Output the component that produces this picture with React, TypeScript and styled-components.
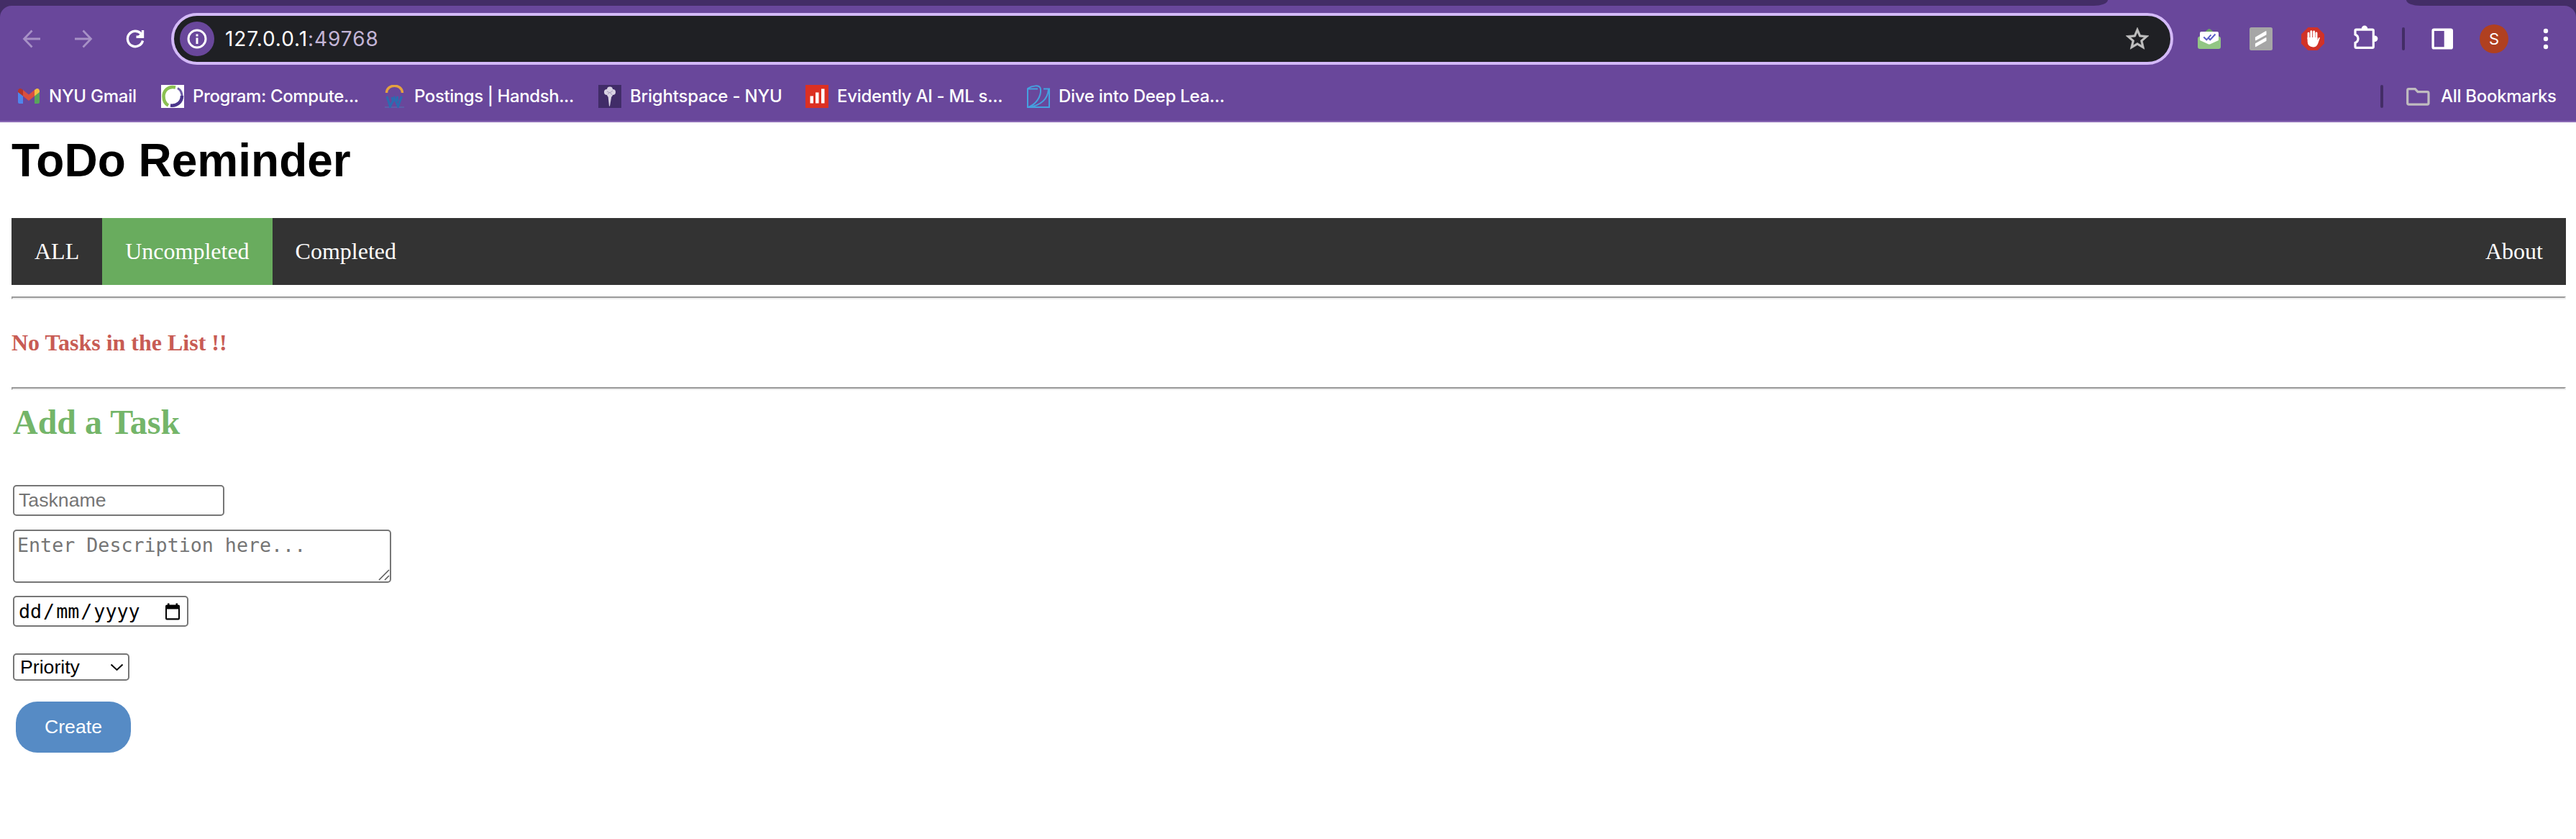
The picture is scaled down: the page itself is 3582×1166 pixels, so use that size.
import React from "react";
import styled, { createGlobalStyle } from "styled-components";

const GlobalStyle = createGlobalStyle`
  body { margin: 0; background: #fff; }
  * { box-sizing: border-box; }
`;

const sans = `"Liberation Sans", Arial, sans-serif`;
const serif = `"Liberation Serif", "Times New Roman", serif`;
const ui = `Inter, Roboto, sans-serif`;
const mono = `"DejaVu Sans Mono", monospace`;

const Screen = styled.div`
  width: 3582px;
  height: 1166px;
  overflow: hidden;
  background: #fff;
`;

const Chrome = styled.header`
  height: 170px;
  background: #432d66;
  border-bottom: 2px solid #8b6bb5;
  display: flex;
  flex-direction: column;
`;
const TabStrip = styled.div`
  height: 8px;
  flex: none;
  background: #69479b;
  display: flex;
  justify-content: space-between;
`;
const InactiveTabs = styled.div<{ $side: "left" | "right" }>`
  width: ${(p) => (p.$side === "left" ? 2931 : 236)}px;
  background: #432d66;
  border-radius: ${(p) => (p.$side === "left" ? "0 0 20px 0 / 0 0 8px 0" : "0 0 0 20px / 0 0 0 8px")};
`;
const ChromeBody = styled.div`
  flex: 1;
  background: #69479b;
  border-radius: 16px 16px 0 0;
  display: flex;
  flex-direction: column;
`;
const Toolbar = styled.div`
  height: 92px;
  flex: none;
  display: flex;
  align-items: center;
`;
const NavButtons = styled.div`
  width: 238px;
  flex: none;
  padding-left: 24px;
  display: flex;
  gap: 32px;
`;
const Glyph = styled.svg<{ $s?: number }>`
  display: block;
  flex: none;
  width: ${(p) => p.$s ?? 40}px;
  height: ${(p) => p.$s ?? 40}px;
`;
const AddressBar = styled.div`
  width: 2784px;
  flex: none;
  height: 72px;
  border: 4px solid #d3b9f8;
  border-radius: 36px;
  background: #1f2024;
  display: flex;
  align-items: center;
  padding: 0 29px 0 8px;
`;
const InfoBadge = styled.div`
  width: 48px;
  height: 48px;
  border-radius: 50%;
  background: #69479b;
  display: grid;
  place-items: center;
`;
const Url = styled.div`
  flex: 1;
  margin-left: 15px;
  font: 400 28px/36px ${ui};
  letter-spacing: 0.95px;
  color: #fff;
  span { color: #c3b5d6; }
`;
const Extensions = styled.div`
  flex: 1;
  min-width: 0;
  display: flex;
  align-items: center;
  padding-left: 30px;
`;
const ExtSlot = styled.div<{ $w: number }>`
  width: ${(p) => p.$w}px;
  flex: none;
  display: flex;
  justify-content: center;
`;
const Divider = styled.div`
  width: 4px;
  height: 32px;
  border-radius: 2px;
  background: #432d66;
`;
const Avatar = styled.div`
  width: 40px;
  height: 40px;
  border-radius: 50%;
  background: #b04020;
  color: #fff;
  font: 400 22px/40px ${ui};
  text-align: center;
`;
const Bookmarks = styled.nav`
  height: 68px;
  display: flex;
  align-items: center;
  padding: 0 0 0 24px;
`;
const Bookmark = styled.a<{ $w: number }>`
  width: ${(p) => p.$w}px;
  display: flex;
  align-items: center;
  gap: 12px;
`;
const BookmarkText = styled.span<{ $ls: number }>`
  font: 500 24px/32px ${ui};
  letter-spacing: ${(p) => p.$ls}px;
  color: #fff;
  white-space: nowrap;
`;
const AllBookmarks = styled.div`
  margin-left: auto;
  width: 272px;
  display: flex;
  align-items: center;
`;
const FolderSlot = styled.div`
  margin: 0 15px 0 32px;
`;

const Page = styled.main`
  padding: 0 14px 0 16px;
`;
const Title = styled.h1`
  margin: 0;
  padding-top: 16px;
  height: 133px;
  font: 700 64px/74px ${sans};
  color: #000;
`;
const Menu = styled.ul`
  list-style: none;
  margin: 0;
  padding: 0;
  height: 93px;
  background: #333;
  display: flex;
`;
const MenuItem = styled.li<{ $active?: boolean; $end?: boolean }>`
  padding: 28px 32px;
  margin-left: ${(p) => (p.$end ? "auto" : 0)};
  background: ${(p) => (p.$active ? "#69ac5e" : "transparent")};
  font: 400 32px/37px ${serif};
  color: #fff;
`;
const Rule = styled.hr`
  height: 4px;
  margin: 0;
  border: 2px solid;
  border-color: #9a9a9a #eee #eee #9a9a9a;
`;
const Empty = styled.p`
  margin: 0;
  height: 122px;
  padding-top: 42px;
  font: 700 32px/37px ${serif};
  color: #c85c54;
`;
const Spacer = styled.div`
  height: 16px;
`;
const TaskForm = styled.form`
  padding-left: 2px;
  display: flex;
  flex-direction: column;
  align-items: flex-start;
`;
const FormTitle = styled.h2`
  margin: 0;
  height: 132px;
  padding-top: 17px;
  font: 700 48px/55px ${serif};
  color: #74b569;
`;
const NameInput = styled.input`
  width: 294px;
  height: 43px;
  margin: 0 0 19px;
  padding: 2px 6px;
  border: 2px solid #767676;
  border-radius: 5px;
  font: 400 26.67px/31px ${sans};
  &::placeholder { color: #757575; opacity: 1; }
`;
const AreaWrap = styled.div`
  position: relative;
  height: 74px;
  margin-bottom: 18px;
`;
const Area = styled.textarea`
  display: block;
  width: 526px;
  height: 74px;
  margin: 0;
  padding: 4px;
  border: 2px solid #767676;
  border-radius: 5px;
  resize: none;
  font: 400 26.67px/31px ${mono};
  &::placeholder { color: #757575; opacity: 1; }
`;
const Grip = styled.svg`
  position: absolute;
  right: 2px;
  bottom: 3px;
  width: 16px;
  height: 16px;
`;
const DateField = styled.div`
  width: 244px;
  height: 43px;
  margin-bottom: 37px;
  padding: 0 9px 0 6px;
  border: 2px solid #767676;
  border-radius: 5px;
  display: flex;
  align-items: center;
  justify-content: space-between;
  font: 400 26.67px/31px ${mono};
  color: #000;
`;
const DateParts = styled.div`
  display: flex;
  gap: 2px;
`;
const CalendarIcon = styled.svg`
  width: 22px;
  height: 24px;
`;
const SelectWrap = styled.div`
  position: relative;
  margin-bottom: 29px;
`;
const Select = styled.select`
  appearance: none;
  display: block;
  width: 162px;
  height: 38px;
  margin: 0;
  padding: 0 8px;
  border: 2px solid #767676;
  border-radius: 5px;
  background: #fff;
  color: #000;
  font: 400 26.67px/31px ${sans};
`;
const Chevron = styled.svg`
  position: absolute;
  right: 8px;
  top: 13px;
  width: 19px;
  height: 13px;
`;
const Create = styled.button`
  width: 160px;
  height: 71px;
  margin-left: 4px;
  padding: 0;
  border: 0;
  border-radius: 30px;
  background: #568bc5;
  color: #fff;
  font: 400 26.67px/31px ${sans};
`;

const GmailIcon = () => (
  <Glyph $s={32} viewBox="0 0 32 32">
    <path d="M1 10v14q0 2 2 2h5V13z" fill="#4f86ec" />
    <path d="M31 10v14q0 2-2 2h-5V13z" fill="#58a55c" />
    <path d="M8 7l8 6.500L24 7v8.500l-8 6.500-8-6.500z" fill="#d95040" />
    <path d="M1 9q0-4 3.500-4Q5.500 5 8 7v8.500L1 10z" fill="#b5362a" />
    <path d="M31 9q0-4-3.500-4Q26.500 5 24 7v8.500L31 10z" fill="#f2bd42" />
  </Glyph>
);
const ProgramIcon = () => (
  <Glyph $s={32} viewBox="0 0 32 32">
    <rect width="32" height="32" fill="#fff" />
    <g fill="none" strokeWidth="4.500">
      <path d="M20 3.500C9 1 3.500 9 3.500 16c0 5 2 10 6.500 12.500" stroke="#8bc053" />
      <path d="M23 4.500c5 3 6.500 8 6 13" stroke="#6c5ba8" strokeWidth="3" />
      <path d="M29 15c0 9-7 14.500-16 13.500" stroke="#4b368c" />
    </g>
  </Glyph>
);
const HandshakeIcon = () => (
  <Glyph $s={32} viewBox="0 0 32 32" fill="none">
    <path d="M5.500 11C6-2 27-2 27.500 11" stroke="#e5a23f" strokeWidth="3.500" />
    <path d="M3 31h27" stroke="#5d5ea8" strokeWidth="2" />
    <path d="M6 16l4.500 14 6-12 5 12 5-14M13 17l2 7M20.500 16v7" stroke="#2b6cb0" strokeWidth="3" />
  </Glyph>
);
const TorchIcon = () => (
  <Glyph $s={32} viewBox="0 0 32 32">
    <rect width="32" height="32" fill="#412c68" />
    <g fill="#d9d3e3">
      <circle cx="12" cy="10" r="4" /><circle cx="20" cy="10" r="4" />
      <circle cx="16" cy="6.500" r="4" /><circle cx="16" cy="13" r="4" />
      <path d="M13.500 15h5L16 29.500h-1z" />
    </g>
    <path d="M12 9l4 2 4-3M13 13l3-3 3 4" stroke="#a59bbb" fill="none" />
  </Glyph>
);
const EvidentlyIcon = () => (
  <Glyph $s={32} viewBox="0 0 32 32">
    <rect width="32" height="32" fill="#dc3022" />
    <path d="M6.500 15.500h4.500V25.500H6.500zM14 10.500h4.500v15H14zM22 5.500h4.500v20H22z" fill="#fff" />
  </Glyph>
);
const DiveIcon = () => (
  <Glyph $s={32} viewBox="0 0 32 32" fill="none" stroke="#45a1e0" strokeWidth="2">
    <path d="M15 5.500H1V31h30V5.500h-8" />
    <path d="M1 5C7 1 18-1 19 6c1 11-7 21-17 25" />
    <path d="M30 6c-1 13-10 22-27 25" />
  </Glyph>
);

const bookmarks = [
  { icon: <GmailIcon />, label: "NYU Gmail", w: 200, ls: -0.25 },
  { icon: <ProgramIcon />, label: "Program: Compute...", w: 308, ls: -0.38 },
  { icon: <HandshakeIcon />, label: "Postings | Handsh...", w: 300, ls: -0.42 },
  { icon: <TorchIcon />, label: "Brightspace - NYU", w: 288, ls: -0.18 },
  { icon: <EvidentlyIcon />, label: "Evidently AI - ML s...", w: 308, ls: -0.28 },
  { icon: <DiveIcon />, label: "Dive into Deep Lea...", w: 300, ls: -0.28 },
];

const BrowserChrome = () => (
  <Chrome>
    <TabStrip>
      <InactiveTabs $side="left" />
      <InactiveTabs $side="right" />
    </TabStrip>
    <ChromeBody>
      <Toolbar>
        <NavButtons>
          <Glyph viewBox="0 0 40 40" fill="none" stroke="#a791c6" strokeWidth="2.800">
            <path d="M32 20H10M20.500 8.500L9.500 20l11 11.500" />
          </Glyph>
          <Glyph viewBox="0 0 40 40" fill="none" stroke="#a791c6" strokeWidth="2.800">
            <path d="M8 20h22M19.500 8.500l11 11.500-11 11.500" />
          </Glyph>
          <Glyph viewBox="0 0 40 40" fill="none" stroke="#fff" strokeWidth="3.400">
            <path d="M30.500 22.500A10.700 10.700 0 1 1 28 12.700" />
            <path d="M30.500 8v9.200H21.500" />
            <path d="M30.500 9.500v7.500h-7.500z" fill="#fff" stroke="none" />
          </Glyph>
        </NavButtons>
        <AddressBar>
          <InfoBadge>
            <Glyph $s={28} viewBox="0 0 28 28">
              <circle cx="14" cy="14" r="12" fill="none" stroke="#fff" strokeWidth="3" />
              <path d="M12.500 12.500h3V21h-3zM12.500 7.500h3v3h-3z" fill="#fff" />
            </Glyph>
          </InfoBadge>
          <Url>127.0.0.1<span>:49768</span></Url>
          <Glyph $s={34} viewBox="0 0 24 24">
            <path fill="#c0c0c0" stroke="#c0c0c0" strokeWidth="0.400" d="M22 9.240l-7.190-.62L12 2 9.190 8.630 2 9.240l5.460 4.730L5.820 21 12 17.270 18.180 21l-1.630-7.030L22 9.240zM12 15.400l-3.760 2.270 1-4.280-3.320-2.880 4.380-.38L12 6.100l1.710 4.040 4.380.38-3.320 2.880 1 4.280L12 15.400z" transform="translate(-1.400 -1.400) scale(1.120)" />
          </Glyph>
        </AddressBar>
        <Extensions>
          <ExtSlot $w={40}>
            <Glyph $s={32} viewBox="0 0 32 32">
              <path d="M8 8l6.500-5.500q1.500-1.200 3 0L24 8z" fill="#6aa367" />
              <path d="M0 16q0-3.500 3.500-3.500h25q3.500 0 3.500 3.500v11q0 3-3 3H3q-3 0-3-3z" fill="#92c684" />
              <path d="M3 8q0-2 2-2h22q2 0 2 2v10l-11 5q-2 1-4 0L3 18z" fill="#fff" />
              <path d="M8.300 13.500l4 3.800 6.200-7M14.800 14.800l2.500 2.500L24.500 9.500" stroke="#5b5fc7" strokeWidth="2" fill="none" />
            </Glyph>
          </ExtSlot>
          <ExtSlot $w={104}>
            <Glyph $s={32} viewBox="0 0 32 32">
              <rect width="32" height="32" rx="2.500" fill="#a6a6a6" />
              <path d="M8.600 14.200L22.800 5.800V10L8.600 17.600zM8.600 22.800l14.200-8v3.600L8.600 26.400z" fill="#fff" stroke="#fff" strokeWidth="1.400" strokeLinejoin="round" />
            </Glyph>
          </ExtSlot>
          <ExtSlot $w={40}>
            <Glyph $s={32} viewBox="0 0 32 32">
              <path d="M9.500 0h13L32 9.500v13L22.500 32h-13L0 22.500v-13z" fill="#d13228" />
              <path d="M10 16V8.300M13.800 14V5.800M17.600 14V6M21 16V8" stroke="#fff" strokeWidth="2.900" strokeLinecap="round" />
              <path d="M8.600 14h13.900v4l1.300-3q1-1.500 2.200-.5l-3 8.500q-2 4.500-6.500 4.500-7.900-.5-7.900-8z" fill="#fff" />
            </Glyph>
          </ExtSlot>
          <ExtSlot $w={104}>
            <Glyph $s={36} viewBox="0 0 36 36" overflow="visible">
              <path d="M6.400 5.200h22.500q1.400 0 1.400 1.400v22.300q0 1.400-1.400 1.400H6.400q-1.400 0-1.400-1.400V23.500q4-1.600 4-5.700T5 12V6.600q0-1.400 1.400-1.400z" fill="none" stroke="#fff" strokeWidth="3.200" />
              <path d="M13.800 5.500V3.600a4.200 4.200 0 0 1 8.400 0v1.900zM31 13.600h1.200a4.200 4.200 0 0 1 0 8.400H31z" fill="#fff" />
            </Glyph>
          </ExtSlot>
          <ExtSlot $w={4}><Divider /></ExtSlot>
          <ExtSlot $w={104}>
            <Glyph $s={32} viewBox="0 0 32 32">
              <rect x="3.100" y="3.300" width="26.200" height="25.600" rx="1.500" fill="none" stroke="#fff" strokeWidth="3.400" />
              <path d="M18.700 2.500h9.500q2 0 2 2v23q0 2-2 2h-9.500z" fill="#fff" />
            </Glyph>
          </ExtSlot>
          <ExtSlot $w={40}><Avatar>S</Avatar></ExtSlot>
          <ExtSlot $w={104}>
            <Glyph viewBox="0 0 40 40" fill="#fff">
              <circle cx="20" cy="9" r="3.200" /><circle cx="20" cy="20" r="3.200" /><circle cx="20" cy="31" r="3.200" />
            </Glyph>
          </ExtSlot>
        </Extensions>
      </Toolbar>
      <Bookmarks>
        {bookmarks.map((b) => (
          <Bookmark key={b.label} $w={b.w}>
            {b.icon}
            <BookmarkText $ls={b.ls}>{b.label}</BookmarkText>
          </Bookmark>
        ))}
        <AllBookmarks>
          <Divider />
          <FolderSlot>
            <Glyph $s={33} viewBox="0 0 33 33">
              <path d="M1.700 7.500q0-1.800 1.800-1.800h8.800l3.700 4h13.200q1.800 0 1.800 1.800v13.800q0 1.800-1.800 1.800H3.500q-1.800 0-1.800-1.800z" fill="none" stroke="#c0bcc0" strokeWidth="3.200" />
            </Glyph>
          </FolderSlot>
          <BookmarkText $ls={-0.3}>All Bookmarks</BookmarkText>
        </AllBookmarks>
      </Bookmarks>
    </ChromeBody>
  </Chrome>
);

export default function App() {
  return (
    <Screen>
      <GlobalStyle />
      <BrowserChrome />
      <Page>
        <Title>ToDo Reminder</Title>
        <Menu>
          <MenuItem>ALL</MenuItem>
          <MenuItem $active>Uncompleted</MenuItem>
          <MenuItem>Completed</MenuItem>
          <MenuItem $end>About</MenuItem>
        </Menu>
        <Spacer />
        <Rule />
        <Empty>No Tasks in the List !!</Empty>
        <Rule />
        <TaskForm>
          <FormTitle>Add a Task</FormTitle>
          <NameInput placeholder="Taskname" />
          <AreaWrap>
            <Area placeholder="Enter Description here..." />
            <Grip viewBox="0 0 16 16" stroke="#555" strokeWidth="1.500">
              <path d="M1 15L15 1M9 15l6-6" />
            </Grip>
          </AreaWrap>
          <DateField>
            <DateParts><span>dd</span><span>/</span><span>mm</span><span>/</span><span>yyyy</span></DateParts>
            <CalendarIcon viewBox="0 0 22 24">
              <path d="M3 2.500h16q2 0 2 2v17q0 2-2 2H3q-2 0-2-2v-17q0-2 2-2zm0 6v12.800h16V8.500z" fillRule="evenodd" />
              <path d="M4 .5h2.500v3H4zM15.500.5H18v3h-2.500z" />
            </CalendarIcon>
          </DateField>
          <SelectWrap>
            <Select><option>Priority</option></Select>
            <Chevron viewBox="0 0 19 13" fill="none" stroke="#000" strokeWidth="2">
              <path d="M1.500 2.500l8 7.500 8-7.500" />
            </Chevron>
          </SelectWrap>
          <Create type="button">Create</Create>
        </TaskForm>
      </Page>
    </Screen>
  );
}
